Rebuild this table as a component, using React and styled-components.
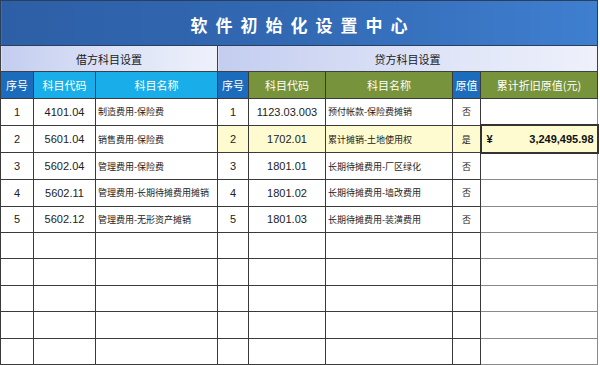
import React from "react";
import styled, { createGlobalStyle } from "styled-components";

const GlobalStyle = createGlobalStyle`
  html, body {
    margin: 0;
    padding: 0;
    background: #ffffff;
  }
  body {
    font-family: "Liberation Sans", "Noto Sans CJK SC", sans-serif;
  }
`;

const widths = [33, 62, 122, 31, 77, 127, 28, 117];

const debit = [
  ["1", "4101.04", "制造费用-保险费"],
  ["2", "5601.04", "销售费用-保险费"],
  ["3", "5602.04", "管理费用-保险费"],
  ["4", "5602.11", "管理费用-长期待摊费用摊销"],
  ["5", "5602.12", "管理费用-无形资产摊销"],
];

const credit = [
  ["1", "1123.03.003", "预付帐款-保险费摊销", "否", ""],
  ["2", "1702.01", "累计摊销-土地使用权", "是", "3,249,495.98"],
  ["3", "1801.01", "长期待摊费用-厂区绿化", "否", ""],
  ["4", "1801.02", "长期待摊费用-墙改费用", "否", ""],
  ["5", "1801.03", "长期待摊费用-装潢费用", "否", ""],
];

const colors = {
  blue: "#1b6cbd",
  cyan: "#19aeea",
  olive: "#77933c",
};

function App() {
  const rows = Array.from({ length: 10 }, (_, i) => i);
  return (
    <>
      <GlobalStyle />
      <Sheet>
        <colgroup>
          {widths.map((w, i) => (
            <col key={i} style={{ width: w }} />
          ))}
        </colgroup>
        <tbody>
          <tr>
            <Title colSpan={8}>软件初始化设置中心</Title>
          </tr>
          <tr>
            <Section colSpan={3}>借方科目设置</Section>
            <Section colSpan={5}>贷方科目设置</Section>
          </tr>
          <tr>
            <Head $bg={colors.blue}>序号</Head>
            <Head $bg={colors.cyan}>科目代码</Head>
            <Head $bg={colors.cyan}>科目名称</Head>
            <Head $bg={colors.blue}>序号</Head>
            <Head $bg={colors.olive}>科目代码</Head>
            <Head $bg={colors.olive}>科目名称</Head>
            <Head $bg={colors.blue}>原值</Head>
            <Head $bg={colors.olive}>累计折旧原值(元)</Head>
          </tr>
          {rows.map((i) => {
            const d = debit[i] || ["", "", ""];
            const c = credit[i] || ["", "", "", "", ""];
            const hl = i === 1;
            return (
              <tr key={i}>
                <Cell $align="center">{d[0]}</Cell>
                <Cell $align="center">{d[1]}</Cell>
                <Cell $cjk>{d[2]}</Cell>
                <Cell $align="center" $hl={hl}>{c[0]}</Cell>
                <Cell $align="center" $hl={hl}>{c[1]}</Cell>
                <Cell $cjk $hl={hl}>{c[2]}</Cell>
                <Cell $align="center" $cjk $hl={hl}>{c[3]}</Cell>
                {c[4] ? (
                  <Amount>
                    <AmountInner>
                      <span>¥</span>
                      <span>{c[4]}</span>
                    </AmountInner>
                  </Amount>
                ) : (
                  <Cell $soft />
                )}
              </tr>
            );
          })}
        </tbody>
      </Sheet>
    </>
  );
}

const Sheet = styled.table`
  border-collapse: collapse;
  table-layout: fixed;
  width: 597px;
  font-size: 11px;
  color: #222;
`;

const Title = styled.td`
  height: 42px;
  padding: 2px 0 0 8px;
  border: 1px solid #2b3f5c;
  background: linear-gradient(90deg, #2d5fa6 0%, #3269b3 50%, #3f7fd0 100%);
  color: #ffffff;
  font-family: "Noto Sans CJK SC", sans-serif;
  font-weight: 700;
  font-size: 17px;
  letter-spacing: 8px;
  text-align: center;
`;

const Section = styled.td`
  height: 25px;
  padding: 0;
  border: 1px solid #404040;
  background: linear-gradient(90deg, #c3cdef 0%, #dde3f7 55%, #eef1fb 100%);
  color: #1a1a1a;
  font-family: "Noto Sans CJK SC", sans-serif;
  font-size: 11px;
  text-align: center;
`;

const Head = styled.td`
  height: 26px;
  padding: 0;
  border: 1px solid #3a3a3a;
  background: ${(p) => p.$bg};
  color: #ffffff;
  font-family: "Noto Sans CJK SC", sans-serif;
  font-size: 11px;
  text-align: center;
  white-space: nowrap;
  overflow: hidden;
`;

const Cell = styled.td`
  height: 25.4px;
  padding: ${(p) => (p.$align === "center" ? "0" : "0 0 0 2px")};
  border: 1px solid ${(p) => (p.$soft ? "#8a8a8a" : "#3a3a3a")};
  background: ${(p) => (p.$hl ? "#fdfbcf" : "#ffffff")};
  font-family: ${(p) =>
    p.$cjk
      ? '"Noto Sans CJK SC", sans-serif'
      : '"Liberation Sans", "Noto Sans CJK SC", sans-serif'};
  font-size: ${(p) => (p.$cjk ? "9px" : "11px")};
  text-align: ${(p) => p.$align || "left"};
  white-space: nowrap;
  overflow: hidden;
`;

const Amount = styled.td`
  height: 25.4px;
  padding: 0;
  border: 2px solid #333333;
  background: #fdfbcf;
`;

const AmountInner = styled.div`
  display: flex;
  justify-content: space-between;
  align-items: center;
  padding: 0 3px 0 5px;
  font-family: "Liberation Sans", sans-serif;
  font-weight: 700;
  font-size: 11px;
  color: #111;
`;

export default App;
